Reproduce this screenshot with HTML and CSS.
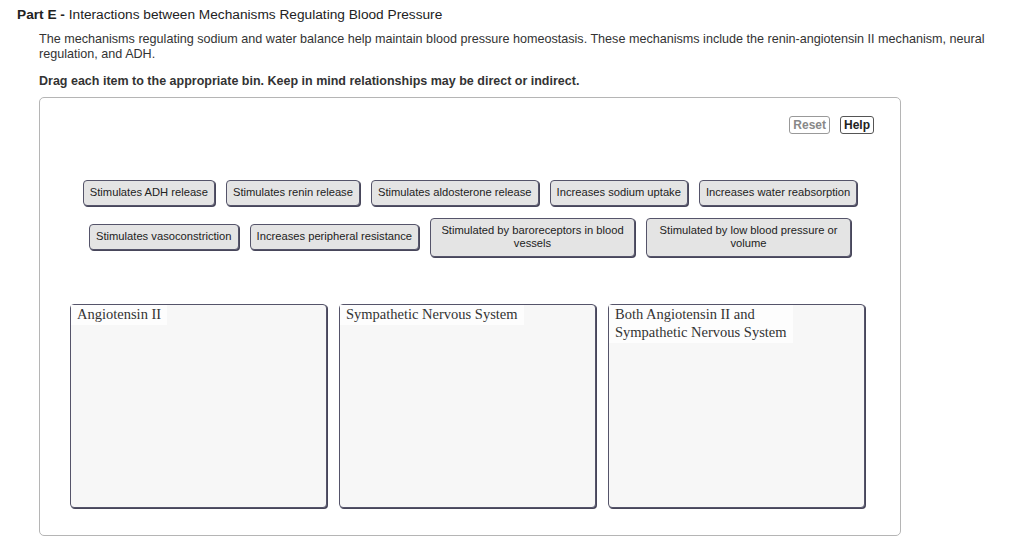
FILE: index.html
```html
<!DOCTYPE html>
<html>
<head>
  <title>Part E - Interactions between Mechanisms Regulating Blood Pressure</title>
  <link rel="stylesheet" href="styles.css">
</head>
<body>
  <div class="part">
    <h2 class="part-title"><b>Part E -</b> Interactions between Mechanisms Regulating Blood Pressure</h2>
    <div class="part-body">
      <p class="intro">The mechanisms regulating sodium and water balance help maintain blood pressure homeostasis. These mechanisms include the renin-angiotensin II mechanism, neural regulation, and ADH.</p>
      <p class="instructions">Drag each item to the appropriate bin. Keep in mind relationships may be direct or indirect.</p>

      <div class="workspace">
        <div class="toolbar">
          <span class="tool-btn disabled">Reset</span>
          <span class="tool-btn">Help</span>
        </div>

        <!-- items waiting to be sorted -->
        <div class="tray">
          <div class="chip">Stimulates ADH release</div>
          <div class="chip">Stimulates renin release</div>
          <div class="chip">Stimulates aldosterone release</div>
          <div class="chip">Increases sodium uptake</div>
          <div class="chip">Increases water reabsorption</div>
          <div class="chip">Stimulates vasoconstriction</div>
          <div class="chip">Increases peripheral resistance</div>
          <div class="chip">Stimulated by baroreceptors in blood vessels</div>
          <div class="chip">Stimulated by low blood pressure or volume</div>
        </div>

        <div class="bins">
          <div class="bin"><span class="bin-label">Angiotensin II</span></div>
          <div class="bin"><span class="bin-label">Sympathetic Nervous System</span></div>
          <div class="bin"><span class="bin-label">Both Angiotensin II and<br>Sympathetic Nervous System</span></div>
        </div>
      </div>
    </div>
  </div>
</body>
</html>
```

FILE: styles.css
```css
/* drag-and-drop sorting question */
body {
  margin: 0;
  font-family: Arial, "Liberation Sans", sans-serif;
  color: #222;
  background: #fff;
}
.part {
  padding: 7px 0 0 17px;
}
.part-title {
  margin: 0;
  font-size: 13.7px;
  font-weight: normal;
  line-height: 16px;
  color: #222;
}
.part-title b {
  font-weight: bold;
}
.part-body {
  margin-left: 22px;
}
.intro {
  width: 964px;
  margin: 9px 0 0;
  font-size: 12.6px;
  line-height: 15px;
  color: #333;
}
.instructions {
  margin: 12px 0 0;
  font-size: 12.5px;
  font-weight: bold;
  line-height: 15px;
  color: #333;
}
.workspace {
  width: 862px;
  height: 439px;
  box-sizing: border-box;
  margin-top: 8px;
  padding-top: 18px;
  border: 1px solid #b5b5b5;
  border-radius: 5px;
}
.toolbar {
  display: flex;
  justify-content: flex-end;
  gap: 10px;
  padding-right: 26px;
}
.tool-btn {
  height: 18px;
  box-sizing: border-box;
  padding: 0 3px;
  border: 1px solid #555;
  border-radius: 3px;
  font-size: 12px;
  font-weight: bold;
  line-height: 16px;
  color: #222;
}
.tool-btn.disabled {
  border-color: #999;
  color: #888;
}
.tray {
  display: flex;
  flex-wrap: wrap;
  justify-content: center;
  align-items: center;
  gap: 12px 11px;
  margin-top: 46px;
  padding: 0 20px;
}
.chip {
  max-width: 205px;
  box-sizing: border-box;
  padding: 5px 6px;
  background: #e4e4e4;
  border: 1px solid #55546a;
  border-radius: 4px;
  box-shadow: 1px 1px 0 #47465a;
  font-size: 11.2px;
  line-height: 13.5px;
  text-align: center;
  color: #222;
  cursor: move;
}
.bins {
  display: flex;
  gap: 12px;
  margin: 47px 35px 0 30px;
}
.bin {
  flex: 1;
  height: 204px;
  box-sizing: border-box;
  background: #f7f7f7;
  border: 1px solid #55546a;
  border-radius: 4px;
  box-shadow: 1px 1px 0 #47465a;
}
.bin-label {
  display: inline-block;
  padding: 0 6px 2px;
  background: #fdfdfd;
  font-family: "Liberation Serif", "Times New Roman", serif;
  font-size: 14.5px;
  line-height: 18px;
  color: #333;
}
```
